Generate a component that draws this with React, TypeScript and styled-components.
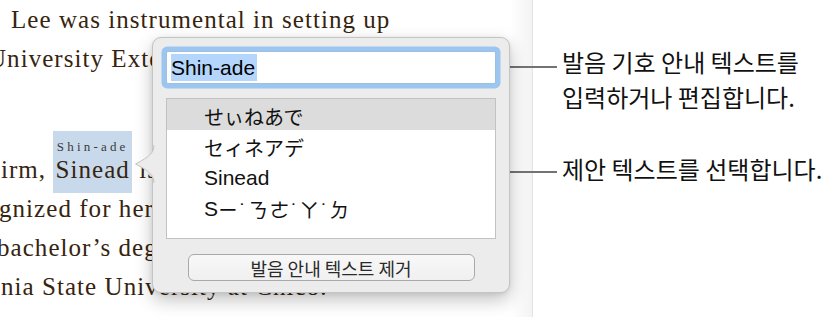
import React from "react";
import styled, { createGlobalStyle } from "styled-components";

const Global = createGlobalStyle`
  html, body { margin: 0; padding: 0; background: #ffffff; }
  body { width: 838px; height: 317px; overflow: hidden; }
`;

const Screen = styled.div`
  position: relative;
  width: 838px;
  height: 317px;
  display: flex;
  background: #ffffff;
  overflow: hidden;
`;

const DocColumn = styled.div`
  width: 532px;
  flex: none;
  overflow: hidden;
  border-right: 1px solid #e3e3e3;
  background: linear-gradient(to right, #ffffff 0, #ffffff 510px, #f4f4f4 531px);
  font-family: "Liberation Serif", "Times New Roman", serif;
  font-size: 25px;
  letter-spacing: 1.05px;
  color: #36240f;
`;

const TextLine = styled.div<{ $indent: number; $top?: number }>`
  white-space: nowrap;
  line-height: 39px;
  margin-left: ${(p) => p.$indent}px;
  margin-top: ${(p) => p.$top ?? 0}px;
`;

const Highlight = styled.span`
  display: inline-block;
  vertical-align: baseline;
  background: #c9d9ec;
  padding: 4px 2px 12px 2px;
  margin-bottom: -4px;
  text-align: center;
`;

const RubyText = styled.span`
  display: block;
  font-size: 13px;
  line-height: 24px;
  letter-spacing: 3.2px;
  color: #3a3a3a;
`;

const RubyBase = styled.span`
  display: block;
  line-height: 22px;
`;

const Popover = styled.div`
  position: absolute;
  left: 152px;
  top: 37px;
  width: 358px;
  height: 256px;
  box-sizing: border-box;
  background: #ececec;
  border: 1px solid #c4c4c4;
  border-radius: 9px;
  box-shadow: 0 7px 18px rgba(0, 0, 0, 0.24), 0 1px 4px rgba(0, 0, 0, 0.08);
  padding: 13px 13px 11px 13px;
  display: flex;
  flex-direction: column;
  font-family: "Liberation Sans", "Noto Sans CJK JP", sans-serif;
`;

const Arrow = styled.svg`
  position: absolute;
  left: -18px;
  top: 107px;
  overflow: visible;
`;

const Field = styled.div`
  height: 33px;
  box-sizing: border-box;
  background: #ffffff;
  border: 1px solid #9fbfe2;
  border-radius: 2px;
  box-shadow: 0 0 0 4.5px #9cc6f0;
  display: flex;
  align-items: center;
  padding-left: 4px;
  font-size: 21px;
  color: #000000;
`;

const Selection = styled.span`
  background: #b4d6fd;
  line-height: 27px;
  padding-right: 2px;
`;

const List = styled.div`
  margin-top: 14px;
  height: 141px;
  box-sizing: border-box;
  background: #ffffff;
  border: 1px solid #c2c2c2;
  display: flex;
  flex-direction: column;
`;

const Row = styled.div<{ $selected?: boolean; $spaced?: boolean }>`
  height: 31px;
  flex: none;
  box-sizing: border-box;
  padding: 3px 0 0 37px;
  display: flex;
  align-items: center;
  background: ${(p) => (p.$selected ? "#dcdcdc" : "transparent")};
  font-size: 20px;
  letter-spacing: ${(p) => (p.$spaced ? "1.6px" : "0")};
  color: #111111;
  white-space: nowrap;
`;

const LatinRow = styled.span`
  font-size: 21px;
  letter-spacing: 0;
`;

const Button = styled.div`
  margin-top: 15px;
  align-self: center;
  width: 287px;
  height: 27px;
  box-sizing: border-box;
  border: 1px solid #a9a9a9;
  border-radius: 6px;
  background: linear-gradient(#f8f8f8, #f0f0f0);
  display: flex;
  align-items: center;
  justify-content: center;
  font-family: "Noto Sans CJK KR", sans-serif;
  font-size: 18px;
  color: #2a2a2a;
`;

const Notes = styled.div`
  flex: 1;
  display: flex;
  flex-direction: column;
  padding-top: 44px;
  gap: 37px;
  font-family: "Noto Sans CJK KR", sans-serif;
  font-size: 24px;
  color: #111111;
`;

const Callout = styled.div<{ $reach: number; $lineTop: number }>`
  display: flex;
  align-items: flex-start;
  margin-left: ${(p) => -p.$reach}px;
  &::before {
    content: "";
    flex: none;
    width: ${(p) => p.$reach + 24}px;
    height: 2px;
    margin-top: ${(p) => p.$lineTop}px;
    margin-right: 5px;
    background: #737373;
  }
`;

const CalloutText = styled.div`
  line-height: 35px;
  white-space: nowrap;
`;

export default function App() {
  return (
    <>
      <Global />
      <Screen>
        <DocColumn>
          <TextLine $indent={11}>Lee was instrumental in setting up</TextLine>
          <TextLine $indent={-12}>University Extension</TextLine>
          <TextLine $indent={1} $top={53}>
            irm,{" "}
            <Highlight>
              <RubyText>Shin-ade</RubyText>
              <RubyBase>Sinead</RubyBase>
            </Highlight>{" "}
            is
          </TextLine>
          <TextLine $indent={-1}>gnized for her outstanding</TextLine>
          <TextLine $indent={-3}>bachelor’s degree from</TextLine>
          <TextLine $indent={1}>nia State University at Chico.</TextLine>
        </DocColumn>
        <Notes>
          <Callout $reach={31} $lineTop={22}>
            <CalloutText>
              발음 기호 안내 텍스트를
              <br />
              입력하거나 편집합니다.
            </CalloutText>
          </Callout>
          <Callout $reach={36} $lineTop={20}>
            <CalloutText>제안 텍스트를 선택합니다.</CalloutText>
          </Callout>
        </Notes>
        <Popover>
          <Arrow width="19" height="38" viewBox="0 0 19 38">
            <path d="M19 0 C19 8 14 12 0.5 19 C14 26 19 30 19 38 Z" fill="#ececec" />
            <path
              d="M19 0 C19 8 14 12 0.5 19 C14 26 19 30 19 38"
              fill="none"
              stroke="#c4c4c4"
              strokeWidth="1"
            />
          </Arrow>
          <Field>
            <Selection>Shin-ade</Selection>
          </Field>
          <List>
            <Row $selected>せぃねあで</Row>
            <Row>セィネアデ</Row>
            <Row>
              <LatinRow>Sinead</LatinRow>
            </Row>
            <Row $spaced>
              <LatinRow>S</LatinRow>ㄧ˙ㄋㄜ˙ㄚ˙ㄉ
            </Row>
          </List>
          <Button>발음 안내 텍스트 제거</Button>
        </Popover>
      </Screen>
    </>
  );
}
